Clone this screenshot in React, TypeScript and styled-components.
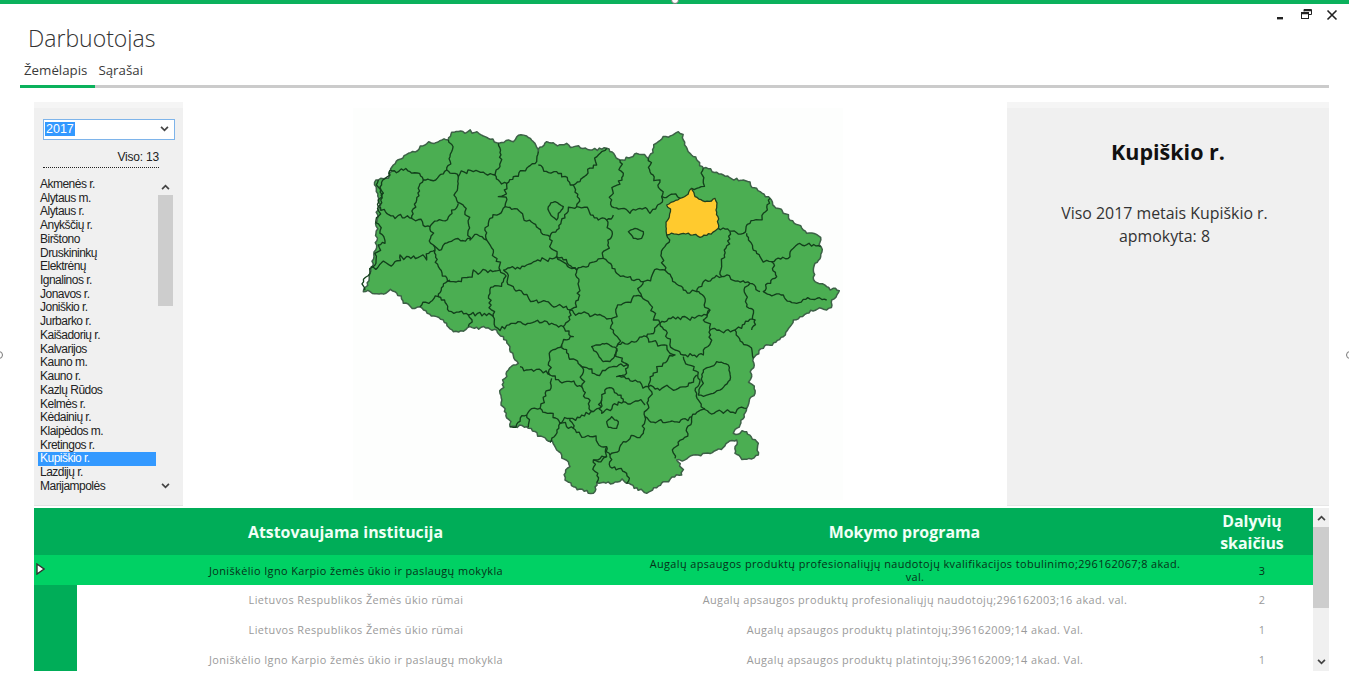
import React from "react";
import styled, { createGlobalStyle } from "styled-components";

const GlobalStyle = createGlobalStyle`
  html, body { margin: 0; padding: 0; background: #fff; overflow: hidden; }
  * { box-sizing: border-box; }
`;

const GREEN = "#00ad58";
const ROW_GREEN = "#00d164";

const Page = styled.div`
  position: relative;
  width: 1349px;
  height: 688px;
  overflow: hidden;
  display: flex;
  flex-direction: column;
  background: #fff;
  font-family: "Open Sans", "Noto Sans", sans-serif;
`;
const TopBar = styled.div`
  height: 4px;
  flex: none;
  background: #0bb15c;
`;
const Handle = styled.span<{ $x: number; $y: number }>`
  position: absolute;
  left: ${(p) => p.$x}px;
  top: ${(p) => p.$y}px;
  width: 8px;
  height: 8px;
  border-radius: 50%;
  background: #fff;
  border: 1px solid #777;
`;
const WindowControls = styled.div`
  position: absolute;
  top: 8px;
  right: 11px;
  display: flex;
  align-items: center;
  gap: 13px;
  svg { display: block; }
`;
const TitleBlock = styled.div`
  height: 47px;
  flex: none;
  padding: 20px 0 0 28px;
  overflow: hidden;
`;
const Title = styled.h1`
  margin: 0;
  font-size: 23px;
  line-height: 29px;
  font-weight: 300;
  color: #333;
`;
const Tabs = styled.nav`
  flex: none;
  margin: 0 20px;
  height: 37px;
  display: flex;
  align-items: flex-end;
  border-bottom: 3px solid #cbcbcb;
`;
const Tab = styled.div<{ $active?: boolean }>`
  font-size: 13.3px;
  line-height: 18px;
  color: #3a3a3a;
  padding: 0 ${(p) => (p.$active ? "8px" : "0")} 6px ${(p) => (p.$active ? "4px" : "3px")};
  margin-bottom: -3px;
  border-bottom: 3px solid ${(p) => (p.$active ? "#0bb15c" : "transparent")};
`;
const Content = styled.main`
  flex: none;
  height: 403px;
  margin-top: 14px;
  padding: 0 20px 0 34px;
  display: grid;
  grid-template-columns: 149px 1fr 322px;
`;
const LeftPanel = styled.aside`
  background: #f0f0f0;
  border-top: 6px solid #f5f5f5;
  border-bottom: 1px solid #e2e2e2;
  padding: 11px 10px 11px 4px;
  display: flex;
  flex-direction: column;
  font-family: "Liberation Sans", Arial, sans-serif;
  color: #222;
`;
const YearSelect = styled.div`
  margin: 0 -2px 0 5px;
  height: 21px;
  border: 1px solid #7eb4ea;
  background: #fff;
  padding: 0 5px 2px 1px;
  display: flex;
  align-items: center;
  justify-content: space-between;
  font-size: 12.5px;
`;
const SelectedYear = styled.span`
  background: #3399ff;
  color: #fff;
  line-height: 14px;
  padding: 0 1px;
`;
const Total = styled.div`
  margin: 10px 14px 0 5px;
  padding: 0 0 3px;
  text-align: right;
  font-size: 12px;
  line-height: 14px;
  letter-spacing: -0.2px;
  border-bottom: 1px dotted #222;
`;
const ListWrap = styled.div`
  flex: 1;
  margin-top: 10px;
  min-height: 0;
  display: flex;
  gap: 2px;
  overflow: hidden;
`;
const List = styled.ul`
  list-style: none;
  margin: 0;
  padding: 0;
  width: 118px;
  flex: none;
`;
const ListItem = styled.li<{ $selected?: boolean }>`
  height: 13.72px;
  line-height: 13.72px;
  font-size: 12px;
  letter-spacing: -0.52px;
  padding-left: 2px;
  white-space: nowrap;
  background: ${(p) => (p.$selected ? "#3399ff" : "transparent")};
  color: ${(p) => (p.$selected ? "#fff" : "#222")};
`;
const ScrollBar = styled.div<{ $w: number }>`
  width: ${(p) => p.$w}px;
  flex: none;
  display: flex;
  flex-direction: column;
  align-items: center;
  background: #f0f0f0;
`;
const ScrollCap = styled.div<{ $h: number }>`
  flex: none;
  height: ${(p) => p.$h}px;
  width: 100%;
  display: flex;
  align-items: center;
  justify-content: center;
  svg { display: block; }
`;
const ScrollThumb = styled.div<{ $h: number }>`
  flex: none;
  width: 100%;
  height: ${(p) => p.$h}px;
  background: #cdcdcd;
`;
const ScrollSpace = styled.div`
  flex: 1;
`;
const MapArea = styled.section`
  display: flex;
  justify-content: center;
  align-items: flex-start;
  padding-left: 10px;
`;
const MapSvg = styled.svg`
  display: block;
  margin-top: -2px;
  width: 500px;
  height: 400px;
  flex: none;
`;
const RightPanel = styled.aside`
  background: #f0f0f0;
  border-top: 6px solid #f5f5f5;
  border-bottom: 1px solid #e6e6e6;
  text-align: center;
`;
const RegionName = styled.h2`
  margin: 29px 0 0;
  font-size: 21.5px;
  line-height: 30px;
  font-weight: 700;
  color: #111;
`;
const RegionInfo = styled.p`
  margin: 35px 0 0;
  padding: 0 47px 0 40px;
  font-size: 15.9px;
  line-height: 23px;
  color: #333;
`;
const TableWrap = styled.section`
  flex: none;
  margin: 3px 20px 0 34px;
  height: 163px;
  display: flex;
  overflow: hidden;
`;
const Table = styled.div`
  flex: 1;
  min-width: 0;
`;
const Row = styled.div<{ $kind: "head" | "selected" | "plain" }>`
  display: grid;
  grid-template-columns: 43px 558px 560px 118px;
  height: ${(p) => (p.$kind === "head" ? 47 : p.$kind === "selected" ? 30 : 29.67)}px;
  background: ${(p) => (p.$kind === "head" ? GREEN : p.$kind === "selected" ? ROW_GREEN : "#fff")};
  color: ${(p) => (p.$kind === "head" ? "#f0fff6" : p.$kind === "selected" ? "#063018" : "#9a9a9a")};
`;
const RowHead = styled.div<{ $green: boolean }>`
  position: relative;
  background: ${(p) => (p.$green ? "transparent" : GREEN)};
  svg { position: absolute; left: 2px; top: 8px; display: block; }
`;
const HeadCell = styled.div<{ $shift: number }>`
  display: flex;
  align-items: center;
  justify-content: center;
  text-align: center;
  font-size: 15.9px;
  line-height: 22px;
  font-weight: 700;
  padding: 1px ${(p) => p.$shift}px 0 0;
`;
const Cell = styled.div<{ $count?: boolean }>`
  display: flex;
  align-items: center;
  justify-content: center;
  text-align: center;
  font-size: 10.9px;
  line-height: 13px;
  font-weight: 500;
  letter-spacing: 0.4px;
  padding: 0 10px 0 ${(p) => (p.$count ? 26 : 10)}px;
`;

const Chevron = ({ up, size = 9 }: { up?: boolean; size?: number }) => (
  <svg width={size} height={size - 3} viewBox="0 0 10 7" fill="none" stroke="#444" strokeWidth="2">
    <path d={up ? "M1 6 L5 2 L9 6" : "M1 1 L5 5 L9 1"} />
  </svg>
);

const districts = [
  "Akmenės r.", "Alytaus m.", "Alytaus r.", "Anykščių r.", "Birštono", "Druskininkų", "Elektrėnų",
  "Ignalinos r.", "Jonavos r.", "Joniškio r.", "Jurbarko r.", "Kaišadorių r.", "Kalvarijos", "Kauno m.",
  "Kauno r.", "Kazlų Rūdos", "Kelmės r.", "Kėdainių r.", "Klaipėdos m.", "Kretingos r.", "Kupiškio r.",
  "Lazdijų r.", "Marijampolės",
];

type Pt = [number, number];

const jag = (pts: Pt[], seed: number, closed = false, amp = 16): string => {
  let s = seed * 7919 + 13;
  const rnd = () => {
    s = (s * 1664525 + 1013904223) % 4294967296;
    return s / 4294967296 - 0.5;
  };
  const list = closed ? [...pts, pts[0]] : pts;
  let d = `M${list[0][0]} ${list[0][1]}`;
  let walk = 0;
  for (let i = 1; i < list.length; i++) {
    const [x0, y0] = list[i - 1];
    const [x1, y1] = list[i];
    const len = Math.hypot(x1 - x0, y1 - y0);
    const n = Math.max(1, Math.round(len / 7));
    const nx = -(y1 - y0) / (len || 1);
    const ny = (x1 - x0) / (len || 1);
    for (let k = 1; k <= n; k++) {
      const t = k / n;
      walk = 0.7 * walk + rnd() * amp;
      const fade = Math.min(1, Math.min(k, n - k) / 2);
      const o = walk * fade;
      const x = x0 + (x1 - x0) * t + nx * o;
      const y = y0 + (y1 - y0) * t + ny * o;
      d += `L${x.toFixed(1)} ${y.toFixed(1)}`;
    }
  }
  return d + (closed ? "Z" : "");
};

const outline: Pt[] = [
  [40, 575], [60, 520], [72, 470], [78, 400], [85, 350], [78, 240], [115, 235], [130, 195], [175, 160], [225, 135],
  [270, 122], [295, 120], [305, 97], [345, 100], [400, 108], [440, 128], [490, 125], [530, 108], [550, 125], [565, 155],
  [590, 125], [650, 130], [720, 150], [770, 145], [810, 180], [860, 160], [895, 175], [925, 125], [985, 95], [1000, 120],
  [1020, 160], [1060, 205], [1120, 225], [1180, 240], [1220, 265], [1260, 295], [1300, 340], [1370, 400], [1412, 412],
  [1412, 470], [1390, 510], [1395, 545], [1430, 560], [1468, 572], [1445, 600], [1430, 630], [1370, 640], [1330, 660],
  [1300, 710], [1240, 745], [1210, 775], [1205, 830], [1215, 880], [1190, 925], [1170, 975], [1150, 1000], [1190, 995],
  [1225, 1030], [1225, 1065], [1190, 1078], [1155, 1060], [1160, 1020], [1100, 1050], [1030, 1065], [980, 1080],
  [995, 1125], [940, 1145], [890, 1180], [830, 1150], [740, 1148], [730, 1180], [670, 1160], [645, 1140], [660, 1100],
  [620, 1050], [590, 1020], [530, 980], [480, 980], [450, 880], [470, 815], [505, 790], [480, 740], [440, 690],
  [360, 680], [310, 695], [290, 670], [210, 620], [160, 610], [135, 575],
];

const yellow: Pt[] = [
  [1025, 265], [1035, 290], [1065, 305], [1095, 295], [1098, 330], [1105, 385], [1050, 412], [1000, 400], [950, 405],
  [948, 380], [958, 350], [950, 315], [990, 295],
];

const borders: Pt[][] = [
  [[295, 120], [300, 170], [290, 210], [240, 240], [220, 240], [180, 215], [120, 210]],
  [[445, 130], [450, 200], [435, 225], [370, 215], [325, 230], [290, 210]],
  [[565, 155], [560, 185], [530, 205], [490, 230], [470, 250], [445, 240], [435, 225]],
  [[770, 145], [740, 195], [690, 245], [670, 255], [620, 215], [565, 195]],
  [[810, 180], [820, 220], [790, 280], [785, 320], [840, 340], [870, 325], [900, 340], [920, 320], [935, 290], [930, 240], [900, 215], [895, 175]],
  [[935, 290], [990, 295]],
  [[1060, 205], [1060, 240], [1040, 265], [1025, 265]],
  [[1105, 385], [1180, 400], [1200, 370], [1240, 340], [1260, 295]],
  [[1190, 400], [1230, 470], [1265, 485], [1320, 470], [1330, 445], [1412, 440]],
  [[1265, 485], [1280, 530], [1240, 575], [1300, 585], [1340, 610], [1430, 600]],
  [[1140, 395], [1115, 500], [1115, 530], [1200, 550], [1230, 575]],
  [[950, 405], [945, 510], [1000, 570], [1040, 575], [1060, 545], [1115, 530]],
  [[670, 255], [680, 320], [745, 360], [770, 360], [790, 345]],
  [[770, 360], [785, 410], [760, 475], [800, 520], [880, 545], [945, 510]],
  [[680, 320], [650, 340], [600, 410], [620, 470], [680, 510], [760, 475]],
  [[600, 410], [550, 370], [465, 320], [445, 290], [470, 250]],
  [[325, 230], [320, 300], [355, 370], [360, 420], [410, 420], [415, 370], [465, 320]],
  [[220, 240], [200, 300], [185, 355], [240, 380], [300, 345], [325, 310]],
  [[120, 210], [85, 320], [110, 340], [185, 355]],
  [[240, 380], [250, 435], [310, 420], [360, 415]],
  [[85, 240], [85, 320], [78, 360], [105, 430], [85, 435], [60, 520], [45, 570]],
  [[62, 500], [135, 485], [150, 465], [230, 480], [255, 450], [250, 435]],
  [[255, 450], [265, 500], [310, 545], [370, 510], [450, 510], [410, 420]],
  [[300, 540], [265, 590], [210, 620]],
  [[265, 590], [305, 635], [355, 645], [430, 650], [420, 580], [460, 545], [450, 510]],
  [[355, 645], [355, 680]],
  [[460, 510], [490, 560], [560, 600], [660, 630], [685, 600], [680, 510], [620, 470], [530, 495], [460, 510]],
  [[430, 650], [435, 680], [540, 670], [640, 680], [660, 630]],
  [[660, 630], [720, 650], [785, 655], [820, 610], [875, 590], [880, 545]],
  [[875, 590], [910, 660], [930, 670], [1040, 650], [1080, 630], [1050, 580], [1040, 575]],
  [[1080, 630], [1060, 660], [1080, 690], [1155, 690], [1215, 660], [1190, 620], [1200, 550]],
  [[1155, 690], [1210, 775]],
  [[1215, 660], [1205, 690]],
  [[785, 655], [800, 740], [890, 710], [930, 670]],
  [[640, 680], [670, 710], [635, 735], [690, 795], [740, 825], [800, 800], [835, 795], [800, 745]],
  [[890, 710], [975, 765], [920, 800], [895, 860], [800, 830], [835, 795]],
  [[930, 670], [975, 750], [1000, 765], [1060, 765], [1080, 690]],
  [[1000, 770], [1050, 840], [1040, 880], [1060, 925], [1120, 940], [1190, 925]],
  [[895, 860], [985, 865], [1040, 825]],
  [[895, 860], [885, 950], [960, 965], [1025, 950], [1065, 925]],
  [[1025, 950], [1010, 985], [975, 1075]],
  [[885, 950], [880, 1000], [820, 1025], [780, 1065], [780, 1100], [830, 1120], [830, 1150]],
  [[635, 735], [600, 780], [600, 825], [510, 800]],
  [[600, 825], [630, 845], [695, 860], [690, 795]],
  [[605, 835], [570, 925], [530, 945], [480, 980]],
  [[570, 925], [630, 970], [660, 955], [730, 935], [695, 860]],
  [[530, 945], [535, 982]],
  [[600, 1028], [630, 970], [670, 985]],
  [[730, 935], [755, 900], [770, 865], [800, 880], [820, 905], [885, 915]],
  [[755, 900], [755, 940], [820, 905]],
  [[660, 955], [670, 985], [720, 1010], [770, 1040], [780, 1065]],
  [[770, 1040], [770, 1070], [730, 1080], [740, 1148]],
  [[730, 1080], [770, 1070]],
];

const holes: Pt[][] = [
  [[835, 395], [855, 385], [880, 395], [875, 415], [850, 415]],
  [[595, 320], [615, 305], [640, 320], [625, 340], [620, 360], [600, 340]],
  [[725, 740], [770, 730], [800, 745], [790, 775], [760, 785], [745, 765]],
  [[1060, 810], [1100, 785], [1135, 795], [1140, 840], [1090, 880], [1045, 885], [1060, 850]],
  [[770, 965], [785, 950], [805, 965], [800, 985], [775, 982]],
];

const rows = [
  { a: "Joniškėlio Igno Karpio žemės ūkio ir paslaugų mokykla", b: "Augalų apsaugos produktų profesionaliųjų naudotojų kvalifikacijos tobulinimo;296162067;8 akad. val.", c: "3" },
  { a: "Lietuvos Respublikos Žemės ūkio rūmai", b: "Augalų apsaugos produktų profesionaliųjų naudotojų;296162003;16 akad. val.", c: "2" },
  { a: "Lietuvos Respublikos Žemės ūkio rūmai", b: "Augalų apsaugos produktų platintojų;396162009;14 akad. Val.", c: "1" },
  { a: "Joniškėlio Igno Karpio žemės ūkio ir paslaugų mokykla", b: "Augalų apsaugos produktų platintojų;396162009;14 akad. Val.", c: "1" },
];

export default function App() {
  return (
    <Page>
      <GlobalStyle />
      <TopBar />
      <Handle $x={671} $y={-4} />
      <Handle $x={-5} $y={351} />
      <Handle $x={1346} $y={351} />
      <WindowControls>
        <svg width="13" height="13" viewBox="0 0 13 13">
          <rect x="3" y="9" width="6" height="2.4" fill="#222" />
        </svg>
        <svg width="13" height="13" viewBox="0 0 13 13" fill="none" stroke="#222">
          <path d="M4 3.5V1.5H11.5V6.5H9" strokeWidth="1" />
          <rect x="1.5" y="4.5" width="7" height="6" strokeWidth="1" />
          <path d="M1.5 5.5H8.5M4 2.5H11.5" strokeWidth="1.4" />
        </svg>
        <svg width="12" height="12" viewBox="0 0 12 12" stroke="#222" strokeWidth="1.6">
          <path d="M1.5 1.5L10.5 10.5M10.5 1.5L1.5 10.5" />
        </svg>
      </WindowControls>
      <TitleBlock>
        <Title>Darbuotojas</Title>
      </TitleBlock>
      <Tabs>
        <Tab $active>Žemėlapis</Tab>
        <Tab>Sąrašai</Tab>
      </Tabs>
      <Content>
        <LeftPanel>
          <YearSelect>
            <SelectedYear>2017</SelectedYear>
            <Chevron />
          </YearSelect>
          <Total>Viso: 13</Total>
          <ListWrap>
            <List>
              {districts.map((d) => (
                <ListItem key={d} $selected={d === "Kupiškio r."}>{d}</ListItem>
              ))}
            </List>
            <ScrollBar $w={15}>
              <ScrollCap $h={17}><Chevron up /></ScrollCap>
              <ScrollThumb $h={111} />
              <ScrollSpace />
              <ScrollCap $h={16}><Chevron /></ScrollCap>
            </ScrollBar>
          </ListWrap>
        </LeftPanel>
        <MapArea>
          <MapSvg viewBox="0 0 1500 1200" role="img" aria-label="Lietuvos savivaldybių žemėlapis">
            <rect x="10" y="24" width="1468" height="1176" fill="#fdfefd" />
            <path d={jag(outline, 1, true, 12)} fill="#4bae52" stroke="#3d6147" strokeWidth="4.5" strokeLinejoin="round" />
            {holes.map((h, i) => (
              <path key={i} d={jag(h, 100 + i, true, 7)} fill="#4bae52" stroke="#123f1b" strokeWidth="4" strokeLinejoin="round" />
            ))}
            {borders.map((b, i) => (
              <path key={i} d={jag(b, 2 + i)} fill="none" stroke="#123f1b" strokeWidth="4" strokeLinejoin="round" />
            ))}
            <path d={jag(yellow, 77, true, 8)} fill="#ffca2e" stroke="#20401f" strokeWidth="3.8" strokeLinejoin="round" />
          </MapSvg>
        </MapArea>
        <RightPanel>
          <RegionName>Kupiškio r.</RegionName>
          <RegionInfo>Viso 2017 metais Kupiškio r. apmokyta: 8</RegionInfo>
        </RightPanel>
      </Content>
      <TableWrap>
        <Table>
          <Row $kind="head">
            <RowHead $green />
            <HeadCell $shift={21}>Atstovaujama institucija</HeadCell>
            <HeadCell $shift={21}>Mokymo programa</HeadCell>
            <HeadCell $shift={4}>Dalyvių<br />skaičius</HeadCell>
          </Row>
          {rows.map((r, i) => (
            <Row key={i} $kind={i === 0 ? "selected" : "plain"}>
              <RowHead $green={i === 0}>
                {i === 0 && (
                  <svg width="9" height="12" viewBox="0 0 9 12">
                    <path d="M1 1 L8 6 L1 11 Z" fill="#fff" stroke="#333" strokeWidth="1.4" />
                  </svg>
                )}
              </RowHead>
              <Cell>{r.a}</Cell>
              <Cell>{r.b}</Cell>
              <Cell $count>{r.c}</Cell>
            </Row>
          ))}
        </Table>
        <ScrollBar $w={16}>
          <ScrollCap $h={19}><Chevron up /></ScrollCap>
          <ScrollThumb $h={81} />
          <ScrollSpace />
          <ScrollCap $h={18}><Chevron /></ScrollCap>
        </ScrollBar>
      </TableWrap>
    </Page>
  );
}
